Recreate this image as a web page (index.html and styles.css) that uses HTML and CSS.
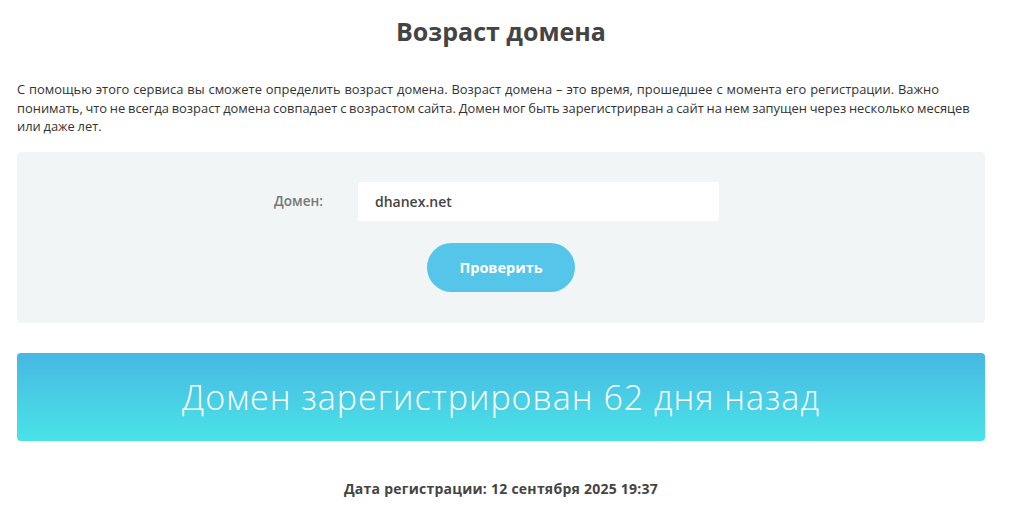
FILE: index.html
```html
<!DOCTYPE html>
<html lang="ru">
<head>
<meta charset="utf-8">
<link rel="stylesheet" href="styles.css">
</head>
<body>
<div class="page">
  <h1 class="title">Возраст домена</h1>
  <p class="intro"><span class="first">С помощью этого сервиса вы сможете определить возраст домена. Возраст домена – это время, прошедшее с момента его регистрации. Важно</span><br>понимать, что не всегда возраст домена совпадает с возрастом сайта. Домен мог быть зарегистрирван а сайт на нем запущен через несколько месяцев или даже лет.</p>
  <form class="panel">
    <div class="field">
      <label class="label" for="domain">Домен:</label>
      <input class="input" id="domain" type="text" value="dhanex.net">
    </div>
    <button class="btn" type="button">Проверить</button>
  </form>
  <div class="result">Домен зарегистрирован 62 дня назад</div>
  <div class="date">Дата регистрации: 12 сентября 2025 19:37</div>
</div>
</body>
</html>
```
FILE: styles.css
```css
html, body { margin: 0; padding: 0; background: #fff; }
body { font-family: "Open Sans", "Noto Sans", sans-serif; color: #444; }
.page { width: 968px; margin-left: 17px; }
.title {
  margin: 0; padding-top: 15px; height: 38px;
  text-align: center; font-size: 25px; font-weight: 700; color: #444;
  line-height: 32px;
}
.intro {
  margin: 27px 0 0; font-size: 12.9px; line-height: 18.5px; color: #333;
  word-spacing: -0.6px;
}
.first { word-spacing: 0.55px; }
.panel {
  margin-top: 16px; height: 171px; background: #f2f5f6; border-radius: 4px;
  display: flex; flex-direction: column; align-items: center; box-sizing: border-box;
  padding-top: 30px;
}
.field { display: flex; align-items: center; margin-left: -9px; }
.label { width: 84px; font-size: 13.5px; font-weight: 600; color: #777; }
.input {
  width: 361px; height: 39px; box-sizing: border-box; border: none; background: #fff;
  border-radius: 2px; padding: 0 17px; font-family: inherit; font-size: 14px; font-weight: 600;
  color: #444; outline: none;
}
.btn {
  margin-top: 22px; width: 148px; height: 49px; border: none; border-radius: 25px;
  background: #55c5ea; color: #fff; font-family: inherit; font-size: 14.5px; font-weight: 700;
  cursor: pointer;
}
.result {
  margin-top: 30px; height: 88px; border-radius: 4px;
  background: linear-gradient(to bottom, #47b8e3, #4ae3e6);
  color: #fff; font-size: 34px; font-weight: 300; display: flex; align-items: center;
  justify-content: center; letter-spacing: 1px;
}
.date {
  margin-top: 38px; text-align: center; font-size: 14px; font-weight: 700; color: #444;
  letter-spacing: 0.25px;
}
```
